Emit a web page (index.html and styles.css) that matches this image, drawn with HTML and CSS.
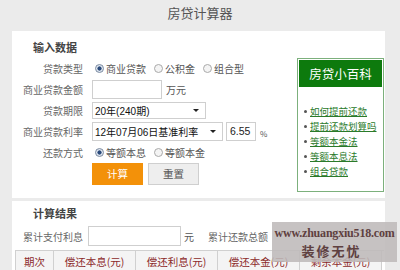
FILE: index.html
```html
<!DOCTYPE html>
<html lang="zh">
<head>
<meta charset="utf-8">
<link rel="stylesheet" href="styles.css">
</head>
<body>
<div class="title">房贷计算器</div>
<div class="panel panel-input">
  <div class="form">
    <div class="heading">输入数据</div>
    <div class="row">
      <div class="label">贷款类型</div>
      <div class="ctrl">
        <span class="radio checked"></span><span class="opt">商业贷款</span>
        <span class="radio"></span><span class="opt">公积金</span>
        <span class="radio"></span><span class="opt">组合型</span>
      </div>
    </div>
    <div class="row">
      <div class="label">商业贷款金额</div>
      <div class="ctrl">
        <span class="input w70"></span><span class="unit">万元</span>
      </div>
    </div>
    <div class="row">
      <div class="label">贷款期限</div>
      <div class="ctrl">
        <span class="select w114"><span class="sel-text">20年(240期)</span><span class="arrow"></span></span>
      </div>
    </div>
    <div class="row">
      <div class="label">商业贷款利率</div>
      <div class="ctrl">
        <span class="select w130"><span class="sel-text">12年07月06日基准利率</span><span class="arrow"></span></span>
        <span class="input w30 num">6.55</span><span class="unit small">%</span>
      </div>
    </div>
    <div class="row">
      <div class="label">还款方式</div>
      <div class="ctrl">
        <span class="radio checked"></span><span class="opt">等额本息</span>
        <span class="radio"></span><span class="opt">等额本金</span>
      </div>
    </div>
    <div class="buttons">
      <span class="btn btn-calc">计算</span>
      <span class="btn btn-reset">重置</span>
    </div>
  </div>
  <div class="wiki">
    <div class="wiki-head">房贷小百科</div>
    <ul class="wiki-list">
      <li><a>如何提前还款</a></li>
      <li><a>提前还款划算吗</a></li>
      <li><a>等额本金法</a></li>
      <li><a>等额本息法</a></li>
      <li><a>组合贷款</a></li>
    </ul>
  </div>
</div>
<div class="panel panel-result">
  <div class="heading">计算结果</div>
  <div class="res-row">
    <span class="res-label">累计支付利息</span>
    <span class="input w93"></span><span class="unit">元</span>
    <span class="res-label second">累计还款总额</span>
  </div>
  <div class="table">
    <div class="cell c1">期次</div>
    <div class="cell c2">偿还本息(元)</div>
    <div class="cell c2">偿还利息(元)</div>
    <div class="cell c2">偿还本金(元)</div>
    <div class="cell c2">剩余本金(元)</div>
  </div>
  <div class="watermark">
    <div class="wm-url">www.zhuangxiu518.com</div>
    <div class="wm-name">装修无忧</div>
  </div>
</div>
</body>
</html>
```
FILE: styles.css
```css
* { box-sizing: border-box; }
body {
  margin: 0;
  background: #ebebeb;
  font-family: "Noto Sans CJK SC", "Liberation Sans", sans-serif;
  font-size: 10px;
  color: #555;
  width: 400px;
  height: 270px;
  overflow: hidden;
  white-space: nowrap;
}
.title {
  height: 31px;
  line-height: 26px;
  text-align: center;
  font-size: 13px;
  color: #555;
}
.panel {
  background: #fff;
  margin-left: 12px;
  width: 373px;
}
.panel-input {
  height: 167px;
  display: flex;
  margin-bottom: 3px;
}
.form {
  width: 285px;
  padding-top: 8px;
}
.heading {
  font-weight: bold;
  color: #444;
  font-size: 11px;
  line-height: 16px;
  height: 16px;
  padding-left: 21px;
  margin-bottom: 3px;
}
.row {
  display: flex;
  align-items: center;
  height: 21px;
}
.label {
  width: 71px;
  text-align: right;
  color: #666;
}
.ctrl {
  display: flex;
  align-items: center;
  margin-left: 9px;
}
.radio {
  width: 9px;
  height: 9px;
  border-radius: 50%;
  border: 1px solid #aaa;
  background: #f4f4f4;
  margin-right: 2px;
}
.ctrl .radio:first-child { margin-left: 3px; }
.radio.checked {
  border-color: #7a8aa0;
  background: radial-gradient(circle, #2a4a7a 0 1.8px, #dfe6f0 2.4px);
}
.opt {
  margin-right: 8px;
  color: #555;
}
.input {
  display: inline-block;
  height: 19px;
  border: 1px solid #cfcfcf;
  background: #fff;
}
.w70 { width: 70px; }
.w30 { width: 30px; margin-left: 3px; }
.w93 { width: 93px; height: 20px; }
.num {
  font-family: "Liberation Sans", sans-serif;
  font-size: 10.5px;
  color: #222;
  line-height: 17px;
  padding-left: 3px;
}
.unit {
  margin-left: 4px;
  color: #555;
}
.unit.small { font-size: 8px; margin-top: 3px; }
.select {
  display: inline-flex;
  align-items: center;
  justify-content: space-between;
  height: 17px;
  border: 1px solid #cfcfcf;
  background: #fff;
  padding: 0 6px 0 2px;
}
.w114 { width: 114px; }
.w130 { width: 131px; height: 19px; }
.sel-text {
  color: #111;
  font-size: 10px;
  font-family: "Liberation Sans", "Noto Sans CJK SC", sans-serif;
}
.arrow {
  width: 0;
  height: 0;
  border-left: 3px solid transparent;
  border-right: 3px solid transparent;
  border-top: 3px solid #222;
}
.buttons {
  display: flex;
  gap: 5px;
  margin-left: 80px;
  margin-top: 0;
}
.btn {
  width: 51px;
  height: 22px;
  line-height: 22px;
  text-align: center;
  font-size: 10.5px;
}
.btn-calc {
  background: #f39109;
  color: #fff;
}
.btn-reset {
  background: #eeeeee;
  border: 1px solid #cfcfcf;
  color: #555;
  line-height: 20px;
}
.wiki {
  margin-top: 27px;
  width: 87px;
  height: 134px;
  border: 1px solid #7cb07c;
  padding: 1px;
}
.wiki-head {
  background: #0d7a0d;
  color: #fff;
  text-align: center;
  font-size: 12.5px;
  height: 27px;
  line-height: 27px;
}
.wiki-list {
  list-style: none;
  margin: 0;
  padding: 17px 0 0 5px;
}
.wiki-list li {
  height: 15px;
  line-height: 15px;
  display: flex;
  align-items: center;
}
.wiki-list li::before {
  content: "";
  width: 3px;
  height: 3px;
  border-radius: 50%;
  background: #555;
  margin-right: 3px;
}
.wiki-list a {
  color: #2a7a2a;
  text-decoration: underline;
  font-size: 9.5px;
}
.panel-result {
  height: 80px;
  padding-top: 4px;
  position: relative;
}
.panel-result .heading {
  height: 16px;
  margin-bottom: 5px;
}
.res-row {
  display: flex;
  align-items: center;
  height: 20px;
  padding-left: 11px;
}
.res-label { color: #666; margin-right: 5px; }
.unit + .res-label.second { margin-left: 14px; }
.res-row .unit { margin-left: 3px; }
.table {
  display: flex;
  margin: 4px 0 0 3px;
  border-top: 1px solid #d0d0d0;
  border-left: 1px solid #d0d0d0;
  width: 369px;
}
.cell {
  height: 26px;
  line-height: 22px;
  border-right: 1px solid #d0d0d0;
  text-align: center;
  background: #f4f4f4;
  color: #8c2a2a;
  font-size: 10.5px;
}
.c1 { width: 38px; }
.c2 { width: 82px; }
.watermark {
  position: absolute;
  left: 260px;
  top: 21px;
  width: 125px;
  height: 40px;
  background: rgba(190, 186, 186, 0.88);
  text-align: center;
  color: #5e4040;
  font-family: "Liberation Serif", serif;
  font-weight: bold;
}
.wm-url {
  font-size: 12px;
  line-height: 17px;
  padding-top: 3px;
  letter-spacing: -0.2px;
}
.wm-name {
  font-family: "Noto Sans CJK SC", serif;
  font-size: 13px;
  line-height: 17px;
  letter-spacing: 2px;
  padding-right: 6px;
}
```
